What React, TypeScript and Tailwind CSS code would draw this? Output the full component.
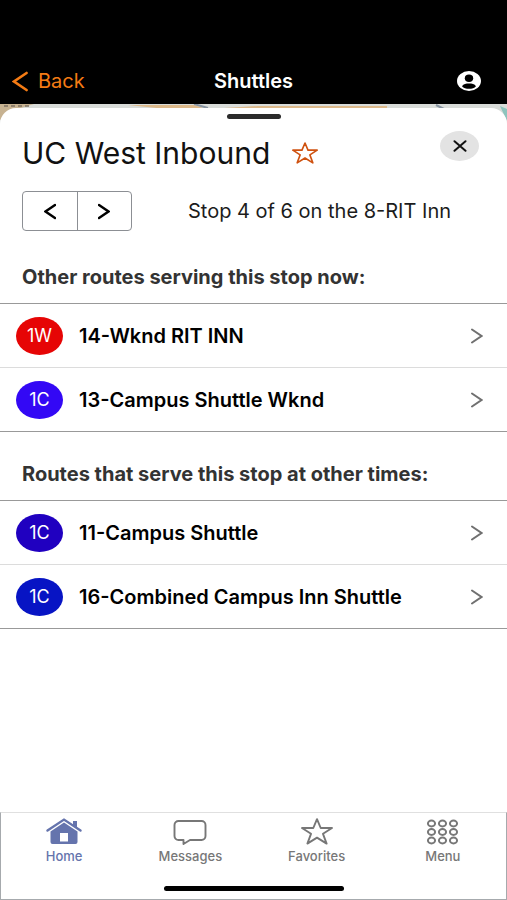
type Route = {
  code: string;
  name: string;
  color: string;
};

const currentRoutes: Route[] = [
  { code: "1W", name: "14-Wknd RIT INN", color: "bg-[#e60505]" },
  { code: "1C", name: "13-Campus Shuttle Wknd", color: "bg-[#3308f5]" },
];

const otherRoutes: Route[] = [
  { code: "1C", name: "11-Campus Shuttle", color: "bg-[#2000c0]" },
  { code: "1C", name: "16-Combined Campus Inn Shuttle", color: "bg-[#0714c4]" },
];

function Chevron({ className, left = false }: { className: string; left?: boolean }) {
  return (
    <svg viewBox="0 0 12 16" className={className} fill="none" stroke="currentColor" strokeLinecap="round" aria-hidden="true">
      <path d={left ? "M11 1.5 1.5 8 11 14.5" : "M1 1.5 10.5 8 1 14.5"} />
    </svg>
  );
}

function Star({ className }: { className: string }) {
  return (
    <svg viewBox="0 0 32 27" className={className} fill="none" stroke="currentColor" strokeLinejoin="round" aria-hidden="true">
      <path d="M16 1.2 19.7 10H31L22 15.8 25.6 25.6 16 19.6 6.4 25.6 10 15.8 1 10H12.3Z" />
    </svg>
  );
}

function Header() {
  return (
    <header className="grid h-[104px] grid-cols-[1fr_auto_1fr] items-end bg-black pb-[11px] text-white">
      <button className="flex h-6 items-center gap-2.5 justify-self-start pl-3 text-xl text-[#f47b14]">
        <Chevron left className="h-[21px] w-4 stroke-2" />
        Back
      </button>
      <h1 className="text-xl leading-6 font-semibold">Shuttles</h1>
      <button aria-label="Account" className="mr-[26px] flex h-6 items-center justify-self-end">
        <svg viewBox="0 0 24 20" className="h-5 w-6" aria-hidden="true">
          <ellipse cx="12" cy="10" rx="12" ry="10" fill="white" />
          <ellipse cx="12" cy="7.3" rx="4.2" ry="3.7" fill="black" />
          <path d="M5 15.2C6.5 13 9 12.6 12 12.6s5.5.4 7 2.6C17.5 17 15 17.8 12 17.8S6.5 17 5 15.2Z" fill="black" />
        </svg>
      </button>
    </header>
  );
}

// Sliver of the map left visible above the sheet
function MapStrip() {
  return (
    <svg viewBox="0 0 507 20" preserveAspectRatio="none" className="col-start-1 row-start-1 h-5 w-full" aria-hidden="true">
      <path fill="#d9dcd9" d="M0 0h507v20H0z" />
      <path fill="#c7b291" d="M0 0h34L14 6 0 16z" />
      <path fill="#ddb98a" d="M128 1h66l12 4h-40zM208 5l50-3h129v3z" />
      <path stroke="#7d7060" strokeWidth="1.5" strokeDasharray="4 3" d="M4 2h26" />
      <path stroke="#8793a0" strokeWidth="2" d="m194 0 14 4M436 1l8 4" />
      <path fill="#8dc4bd" d="m500 2 7 3v12z" />
    </svg>
  );
}

function RouteList({ routes }: { routes: Route[] }) {
  return (
    <ul className="divide-y divide-[#dcdcdc] border-y border-[#999]">
      {routes.map((route) => (
        <li key={route.name}>
          <a href="#" className="flex h-[63px] items-center pr-6 pl-4">
            <span className={`flex h-[38px] w-[47px] shrink-0 items-center justify-center rounded-[50%] text-lg text-white ${route.color}`}>
              {route.code}
            </span>
            <span className="ml-4 grow text-xl font-semibold text-black">{route.name}</span>
            <Chevron className="h-4 w-3 stroke-2 text-[#707070]" />
          </a>
        </li>
      ))}
    </ul>
  );
}

function StopSheet() {
  return (
    <main className="col-start-1 row-start-1 mt-1 rounded-t-2xl bg-white pt-1.5">
      <div className="mx-auto h-[5px] w-[54px] rounded-full bg-[#2b2b2b]" />
      <div className="flex items-start justify-between pt-3 pr-7 pl-[22px]">
        <div className="flex items-center gap-[22px] pt-0.5">
          <h2 className="text-[30px] leading-10 text-[#111]">UC West Inbound</h2>
          <button aria-label="Add to favorites">
            <Star className="h-[22px] w-[26px] stroke-2 text-[#cf5210]" />
          </button>
        </div>
        <button aria-label="Close" className="flex h-[30px] w-[39px] items-center justify-center rounded-[50%] bg-[#e3e3e3]">
          <svg viewBox="0 0 14 12" className="h-3 w-3.5 stroke-2" stroke="#111" strokeLinecap="round" aria-hidden="true">
            <path d="m1.5 1.2 11 9.6M12.5 1.2l-11 9.6" />
          </svg>
        </button>
      </div>
      <div className="mt-[18px] flex items-center pl-[22px]">
        <div className="flex h-10 w-[110px] shrink-0 divide-x divide-[#8c8f94] rounded-[4px] border border-[#8c8f94] text-black">
          <button aria-label="Previous stop" className="flex flex-1 items-center justify-center">
            <Chevron left className="h-[17px] w-3 stroke-[2.4]" />
          </button>
          <button aria-label="Next stop" className="flex flex-1 items-center justify-center">
            <Chevron className="h-[17px] w-3 stroke-[2.4]" />
          </button>
        </div>
        <p className="grow text-center text-xl text-[#1c1c1c]">Stop 4 of 6 on the 8-RIT Inn</p>
      </div>
      <h3 className="mt-8 mb-3 pl-[22px] text-xl font-bold text-[#333]">Other routes serving this stop now:</h3>
      <RouteList routes={currentRoutes} />
      <h3 className="mt-7 mb-3 pl-[22px] text-xl font-bold text-[#333]">Routes that serve this stop at other times:</h3>
      <RouteList routes={otherRoutes} />
    </main>
  );
}

function HomeIcon() {
  return (
    <svg viewBox="0 0 36 27" className="h-[27px] w-9" aria-hidden="true">
      <path d="M1.5 12.5 18 1.6l16.5 10.9" fill="none" stroke="currentColor" strokeWidth="2.4" strokeLinecap="round" />
      <path d="M27 3h4v7l-4-2.600z" fill="currentColor" />
      <path
        d="M18 4.500 31.500 13.400V24a2 2 0 0 1-2 2h-23a2 2 0 0 1-2-2V13.400zM14 15v8.500h8V15z"
        fill="currentColor"
        fillRule="evenodd"
      />
    </svg>
  );
}

function MessageIcon() {
  return (
    <svg viewBox="0 0 34 27" className="h-[27px] w-[34px]" fill="none" stroke="currentColor" strokeWidth="1.9" strokeLinejoin="round" aria-hidden="true">
      <path d="M5.5 3h23a4 4 0 0 1 4 4v11a4 4 0 0 1-4 4H17l-6.500 4V22h-5a4 4 0 0 1-4-4V7a4 4 0 0 1 4-4Z" />
    </svg>
  );
}

function MenuIcon() {
  return (
    <svg viewBox="0 0 33 27" className="h-[27px] w-[33px]" fill="none" stroke="currentColor" strokeWidth="1.9" aria-hidden="true">
      {[5.5, 14, 22.5].map((cy) =>
        [5.5, 16.5, 27.5].map((cx) => <ellipse key={`${cx}-${cy}`} cx={cx} cy={cy} rx="3.6" ry="3" />)
      )}
    </svg>
  );
}

const tabs = [
  { label: "Home", icon: <HomeIcon />, color: "text-[#6574ad]" },
  { label: "Messages", icon: <MessageIcon />, color: "text-[#777]" },
  { label: "Favorites", icon: <Star className="h-[27px] w-[34px] stroke-[1.9]" />, color: "text-[#777]" },
  { label: "Menu", icon: <MenuIcon />, color: "text-[#777]" },
];

function TabBar() {
  return (
    <nav className="mt-auto border border-[#a6aaad] border-t-[#e0e0e0]">
      <div className="grid grid-cols-4 pt-[5px]">
        {tabs.map((tab) => (
          <a key={tab.label} href="#" className={`flex flex-col items-center gap-[3px] text-[13px] leading-4 font-medium ${tab.color}`}>
            {tab.icon}
            {tab.label}
          </a>
        ))}
      </div>
      <div className="mx-auto mt-[22px] mb-2 h-[5px] w-[180px] rounded-full bg-black" />
    </nav>
  );
}

function App() {
  return (
    <div className="flex min-h-screen flex-col bg-white font-['Inter','Liberation_Sans',sans-serif]">
      <Header />
      <div className="grid">
        <MapStrip />
        <StopSheet />
      </div>
      <TabBar />
    </div>
  );
}

export default App;
